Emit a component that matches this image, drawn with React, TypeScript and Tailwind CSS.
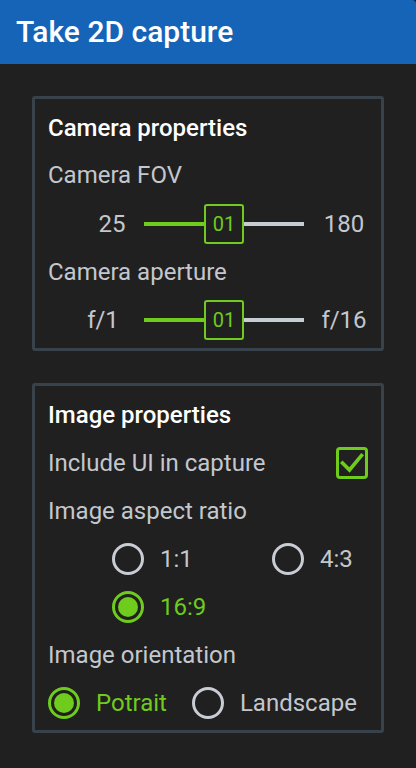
import React from "react";

const GREEN = "#6fcb1c";

function Slider({ left, right, leftClass }: { left: string; right: string; leftClass: string }) {
  return (
    <div className="flex items-center h-10">
      <div className={leftClass}>{left}</div>
      <div className="shrink-0 w-[160px] h-10 flex items-center">
        <div className="h-1 w-[60px] bg-[#6fcb1c]" />
        <div className="w-10 h-10 border-2 border-[#6fcb1c] rounded-[3px] flex items-center justify-center text-[20px] text-[#6fcb1c]">01</div>
        <div className="h-1 w-[60px] bg-[#c8ccd4]" />
      </div>
      <div className="shrink-0 w-[64px] pl-4 text-center text-[24px] leading-8 text-[#c3c7ce] whitespace-nowrap">{right}</div>
    </div>
  );
}

function Radio({ checked, label }: { checked?: boolean; label: string }) {
  return (
    <div className="flex items-center h-8">
      <div
        className={
          checked
            ? "w-8 h-8 rounded-full border-[3px] border-[#6fcb1c] flex items-center justify-center"
            : "w-8 h-8 rounded-full border-[3px] border-[#c8ccd3]"
        }
      >
        {checked && <div className="w-5 h-5 rounded-full bg-[#6fcb1c]" />}
      </div>
      <span className={checked ? "ml-4 text-[24px] leading-8 text-[#6fcb1c]" : "ml-4 text-[24px] leading-8 text-[#c3c7ce]"}>
        {label}
      </span>
    </div>
  );
}

export default function App() {
  return (
    <div className="w-[416px] h-[768px] bg-[#202020] flex flex-col" style={{ fontFamily: "Roboto, 'Noto Sans', sans-serif" }}>
      <div className="h-16 bg-[#1664b8] rounded-tr-[4px] flex items-center pl-4">
        <span className="text-[30px] leading-[64px] font-medium text-white">Take 2D capture</span>
      </div>
      <div className="px-8 pt-8 flex flex-col">
        <div className="border-[3px] border-[#38424b] rounded-[3px] px-[13px] pt-[15px] pb-2 flex flex-col">
          <div className="text-[24px] leading-7 font-medium text-white">Camera properties</div>
          <div className="mt-[17px] text-[24px] leading-8 text-[#c3c7ce]">Camera FOV</div>
          <div className="mt-[13px]">
            <Slider left="25" right="180" leftClass="shrink-0 w-[96px] pl-[32px] text-center text-[24px] leading-8 text-[#c3c7ce]" />
          </div>
          <div className="mt-3 text-[24px] leading-8 text-[#c3c7ce]">Camera aperture</div>
          <div className="mt-3">
            <Slider left="f/1" right="f/16" leftClass="shrink-0 w-[96px] pl-[14px] text-center text-[24px] leading-8 text-[#c3c7ce]" />
          </div>
        </div>
        <div className="mt-8 border-[3px] border-[#38424b] rounded-[3px] px-[13px] pt-[15px] pb-[11px] flex flex-col">
          <div className="text-[24px] leading-7 font-medium text-white">Image properties</div>
          <div className="mt-[18px] flex items-center justify-between h-8">
            <span className="text-[24px] leading-8 text-[#c3c7ce]">Include UI in capture</span>
            <div className="w-8 h-8 border-[3px] border-[#6fcb1c] rounded-[4px] flex items-center justify-center">
              <svg width="26" height="26" viewBox="0 0 26 26">
                <path d="M3.5 13 L10.5 20 L22.5 5.5" fill="none" stroke={GREEN} strokeWidth="3.6" strokeLinecap="square" />
              </svg>
            </div>
          </div>
          <div className="mt-4 text-[24px] leading-8 text-[#c3c7ce]">Image aspect ratio</div>
          <div className="mt-4 pl-16 grid grid-cols-[160px_1fr] gap-y-4">
            <Radio label="1:1" />
            <Radio label="4:3" />
            <Radio checked label="16:9" />
          </div>
          <div className="mt-4 text-[24px] leading-8 text-[#c3c7ce]">Image orientation</div>
          <div className="mt-4 flex items-center gap-[25px]">
            <Radio checked label="Potrait" />
            <Radio label="Landscape" />
          </div>
        </div>
      </div>
    </div>
  );
}
